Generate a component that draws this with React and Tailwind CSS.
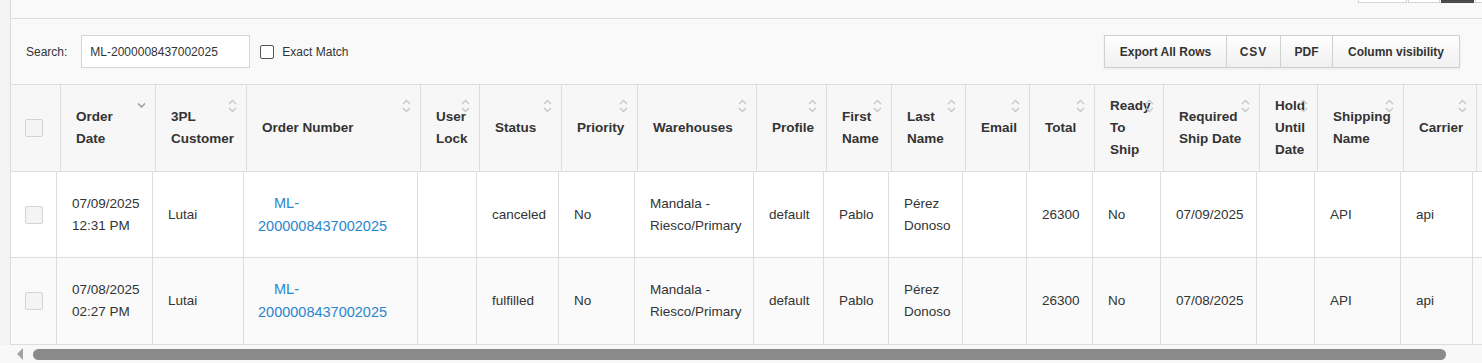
import React from "react";

const headCols = [
  { w: "w-[95px]", label: ["Order", "Date"], sort: "desc" },
  { w: "w-[91px]", label: ["3PL", "Customer"] },
  { w: "w-[174px]", label: ["Order Number"] },
  { w: "w-[59px]", label: ["User", "Lock"] },
  { w: "w-[82px]", label: ["Status"] },
  { w: "w-[76px]", label: ["Priority"] },
  { w: "w-[119px]", label: ["Warehouses"] },
  { w: "w-[70px]", label: ["Profile"] },
  { w: "w-[65px]", label: ["First", "Name"] },
  { w: "w-[74px]", label: ["Last", "Name"] },
  { w: "w-[64px]", label: ["Email"] },
  { w: "w-[65px]", label: ["Total"] },
  { w: "w-[69px]", label: ["Ready", "To", "Ship"] },
  { w: "w-[96px]", label: ["Required", "Ship Date"] },
  { w: "w-[58px]", label: ["Hold", "Until", "Date"] },
  { w: "w-[86px]", label: ["Shipping", "Name"] },
  { w: "w-[73px]", label: ["Carrier"] },
];

const bodyWidths = [
  "w-[96px]", "w-[91px]", "w-[174px]", "w-[59px]", "w-[82px]", "w-[76px]",
  "w-[119px]", "w-[70px]", "w-[65px]", "w-[74px]", "w-[64px]", "w-[66px]",
  "w-[68px]", "w-[96px]", "w-[58px]", "w-[86px]", "w-[72px]",
];

const rows = [
  {
    bg: "bg-white",
    h: "h-[86px]",
    cells: [
      ["07/09/2025", "12:31 PM"], ["Lutai"], "link", [], ["canceled"], ["No"],
      ["Mandala -", "Riesco/Primary"], ["default"], ["Pablo"], ["Pérez", "Donoso"],
      [], ["26300"], ["No"], ["07/09/2025"], [], ["API"], ["api"],
    ],
  },
  {
    bg: "bg-[#fafafa]",
    h: "h-[87px]",
    cells: [
      ["07/08/2025", "02:27 PM"], ["Lutai"], "link", [], ["fulfilled"], ["No"],
      ["Mandala -", "Riesco/Primary"], ["default"], ["Pablo"], ["Pérez", "Donoso"],
      [], ["26300"], ["No"], ["07/08/2025"], [], ["API"], ["api"],
    ],
  },
];

function SortIcon({ dir }) {
  if (dir === "desc") {
    return (
      <svg width="9" height="14" viewBox="0 0 9 14" className="absolute right-[9px] top-[14px]">
        <path d="M1 4.5 L4.5 8 L8 4.5" fill="none" stroke="#999" strokeWidth="1.4" />
      </svg>
    );
  }
  return (
    <svg width="9" height="14" viewBox="0 0 9 14" className="absolute right-[9px] top-[14px]">
      <path d="M1 5 L4.5 1.5 L8 5" fill="none" stroke="#c8c8c8" strokeWidth="1.4" />
      <path d="M1 9 L4.5 12.5 L8 9" fill="none" stroke="#c8c8c8" strokeWidth="1.4" />
    </svg>
  );
}

function Check() {
  return <span className="block w-[18px] h-[18px] rounded-[2px] border border-[#d3d3d3] bg-[#f4f4f4]" />;
}

export default function App() {
  return (
    <div className="w-[1482px] h-[363px] overflow-hidden bg-[#f3f3f3] flex flex-col font-['Liberation_Sans',Arial,sans-serif] text-[#333]">
      <div className="flex-1 pl-[10px] flex min-h-0">
        <div className="flex-1 border-l border-[#dddddd] bg-[#f9f9f9] flex flex-col min-w-0">
          {/* top toolbar remnant */}
          <div className="h-[19px] border-b border-[#dddddd] flex justify-end items-start gap-[1px]">
            <span className="w-[49px] h-[3px] bg-white border-x border-b border-[#d5d5d5]" />
            <span className="w-[32px] h-[3px] bg-white border-x border-b border-[#d5d5d5]" />
            <span className="w-[33px] h-[3px] bg-[#555] border border-[#444]" />
            <span className="w-[7px] h-[3px] bg-white border-l border-b border-[#d5d5d5]" />
          </div>

          {/* search row */}
          <div className="h-[65px] flex items-center pl-[15px] pr-[22px] text-[12px]">
            <span className="mr-[14px]">Search:</span>
            <div className="w-[169px] h-[33px] bg-white border border-[#d5d5d5] flex items-center pl-[8px]">
              ML-2000008437002025
            </div>
            <span className="ml-[10px] w-[14px] h-[14px] rounded-[2px] border border-[#555] bg-white" />
            <span className="ml-[8px]">Exact Match</span>
            <div className="ml-auto flex h-[33px] border border-[#d0d0d0] shadow-[0_1px_2px_rgba(0,0,0,0.08)] font-bold">
              <span className="w-[122px] flex items-center justify-center border-r border-[#d0d0d0] bg-gradient-to-b from-white to-[#f0f0f0]">Export All Rows</span>
              <span className="w-[54px] flex items-center justify-center border-r border-[#d0d0d0] bg-gradient-to-b from-white to-[#f0f0f0] tracking-[1px]">CSV</span>
              <span className="w-[52px] flex items-center justify-center border-r border-[#d0d0d0] bg-gradient-to-b from-white to-[#f0f0f0]">PDF</span>
              <span className="w-[126px] flex items-center justify-center bg-gradient-to-b from-white to-[#f0f0f0]">Column visibility</span>
            </div>
          </div>

          {/* header */}
          <div className="h-[88px] flex border-y border-[#dddddd] bg-[#f7f7f7] text-[13.5px] leading-[22px] font-bold shrink-0">
            <div className="w-[50px] shrink-0 border-r border-[#dddddd] flex items-center pl-[14px]">
              <Check />
            </div>
            {headCols.map((c, i) => (
              <div key={i} className={`${c.w} shrink-0 relative border-r border-[#dddddd] flex flex-col justify-center pl-[15px] whitespace-nowrap`}>
                {c.label.map((l, j) => (
                  <span key={j}>{l}</span>
                ))}
                <SortIcon dir={c.sort} />
              </div>
            ))}
            <div className="w-[100px] shrink-0" />
          </div>

          {/* body rows */}
          {rows.map((r, ri) => (
            <div key={ri} className={`${r.h} ${r.bg} flex border-b border-[#dddddd] text-[13.5px] leading-[22px] shrink-0`}>
              <div className="w-[46px] shrink-0 border-r border-[#dddddd] flex items-center pl-[14px]">
                <Check />
              </div>
              {r.cells.map((c, ci) =>
                c === "link" ? (
                  <div key={ci} className={`${bodyWidths[ci]} shrink-0 border-r border-[#dddddd] flex items-center pl-[14px]`}>
                    <p className="text-[#2a86d0] text-[14.5px] leading-[23px] indent-[16px] whitespace-pre-line">
                      {"ML-\n2000008437002025"}
                    </p>
                  </div>
                ) : (
                  <div key={ci} className={`${bodyWidths[ci]} shrink-0 border-r border-[#dddddd] flex flex-col justify-center pl-[15px] whitespace-nowrap`}>
                    {c.map((t, ti) => <span key={ti}>{t}</span>)}
                  </div>
                )
              )}
              <div className="w-[100px] shrink-0" />
            </div>
          ))}
        </div>
      </div>

      {/* horizontal scrollbar */}
      <div className="h-[18px] bg-[#f8f8f8] flex items-center shrink-0">
        <svg width="8" height="12" viewBox="0 0 8 12" className="ml-[16px]">
          <path d="M7 0 L1 6 L7 12 Z" fill="#a3a3a3" />
        </svg>
        <div className="ml-[9px] w-[1413px] h-[11px] rounded-full bg-[#8a8a8a]" />
      </div>
    </div>
  );
}
